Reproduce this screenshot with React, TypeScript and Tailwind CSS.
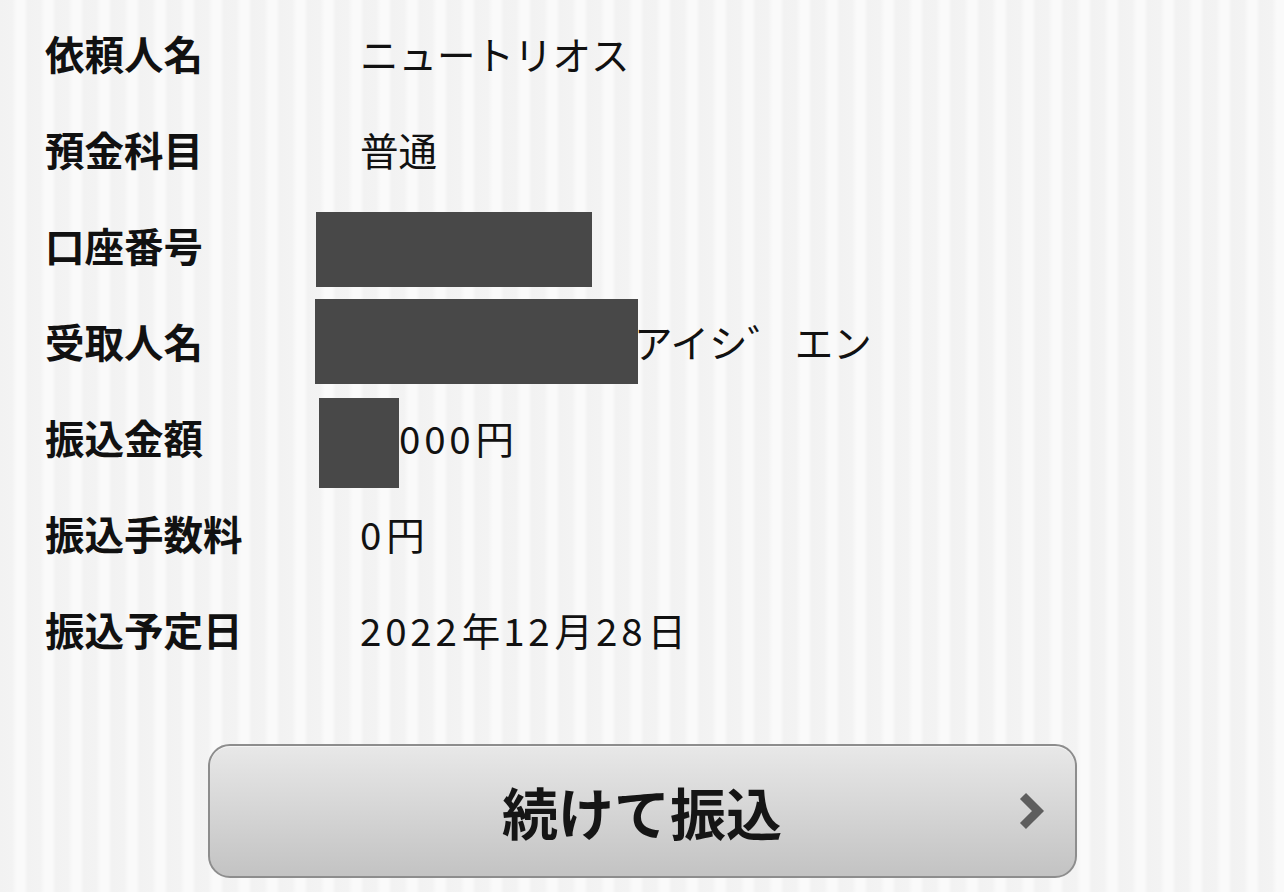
// Widen digit runs to match the wider numerals of the original font
function Num({ text }: { text: string }) {
  const parts = text.split(/(\d+)/).filter(Boolean);
  return (
    <>
      {parts.map((p, i) =>
        /\d/.test(p) ? (
          <span key={i} className="tracking-[3.8px]">
            {p}
          </span>
        ) : (
          <span key={i} className="ml-[1px] mr-[3px]">
            {p}
          </span>
        ),
      )}
    </>
  );
}

const rows: { label: string; value: React.ReactNode }[] = [
  { label: "依頼人名", value: "ニュートリオス" },
  { label: "預金科目", value: "普通" },
  {
    label: "口座番号",
    value: <span className="-ml-[44px] mt-[8px] inline-block h-[75px] w-[276px] bg-[#484848]" />,
  },
  {
    label: "受取人名",
    value: (
      <>
        <span className="-ml-[45px] inline-block h-[85px] w-[323px] bg-[#484848]" />
        <span className="-ml-[4px]">アイシ゛ エン</span>
      </>
    ),
  },
  {
    label: "振込金額",
    value: (
      <>
        <span className="-ml-[41px] mt-[12px] inline-block h-[90px] w-[80px] bg-[#484848]" />
        <Num text="000円" />
      </>
    ),
  },
  { label: "振込手数料", value: <Num text="0円" /> },
  { label: "振込予定日", value: <Num text="2022年12月28日" /> },
];

export default function App() {
  return (
    <main
      className="min-h-[892px] w-full bg-[repeating-linear-gradient(90deg,#f2f2f2_0px,#f3f3f3_12px,#fafafa_17px,#fafafa_24px,#f2f2f2_28px)] pt-[5px] text-[#111]"
      style={{ fontFamily: '"Noto Sans CJK JP", "Noto Sans", sans-serif' }}
    >
      {/* Transfer details */}
      <div className="flex flex-col">
        {rows.map((r) => (
          <div key={r.label} className="flex h-[96px] items-center">
            <div className="w-[360px] pl-[45px] text-[39.5px] font-bold leading-none">{r.label}</div>
            <div className="flex items-center text-[38.5px] leading-none">{r.value}</div>
          </div>
        ))}
      </div>

      {/* Continue button */}
      <div className="mt-[67px] flex justify-center">
        <button className="relative flex h-[134px] w-[869px] items-center justify-center rounded-[22px] border-2 border-[#8d8d8d] bg-gradient-to-b from-[#e8e8e8] to-[#c3c3c3] shadow-[inset_0_1px_0_#f5f5f5]">
          <span className="text-[56px] font-bold leading-none text-[#151515]">続けて振込</span>
          <svg
            className="absolute right-[29px] top-1/2 -translate-y-1/2"
            width="30"
            height="40"
            viewBox="0 0 30 40"
          >
            <path d="M7 5 L22 20 L7 35" fill="none" stroke="#5e5e5e" strokeWidth="8.5" strokeLinejoin="miter" />
          </svg>
        </button>
      </div>
    </main>
  );
}
